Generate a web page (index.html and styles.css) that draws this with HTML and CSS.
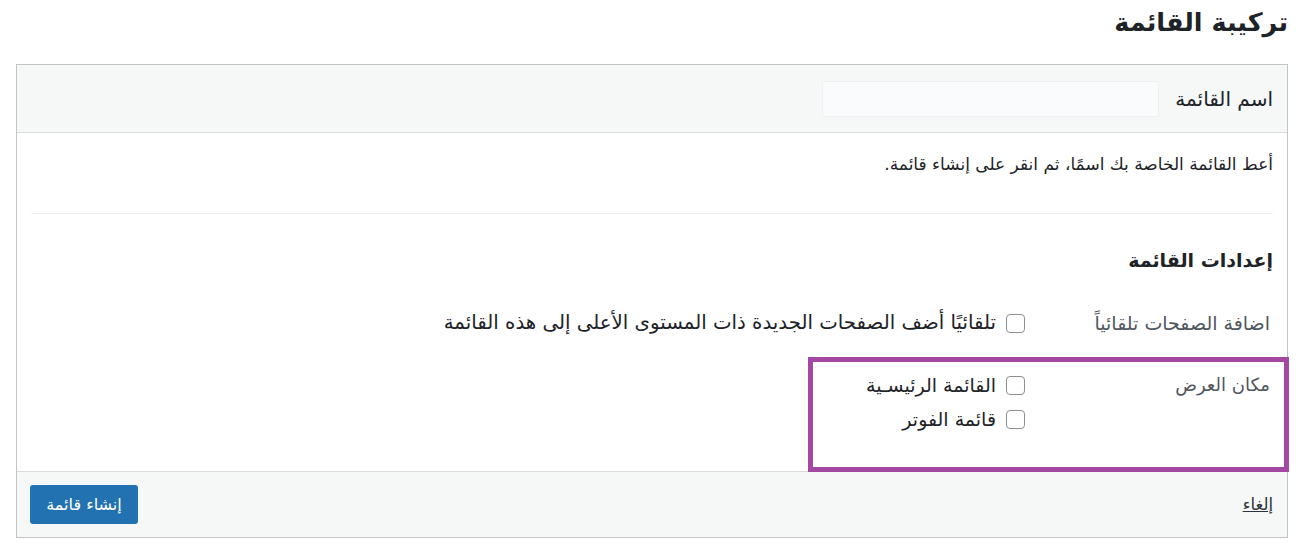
FILE: index.html
```html
<!DOCTYPE html>
<html lang="ar" dir="rtl">
<head>
<meta charset="utf-8">
<title>تركيبة القائمة</title>
<link rel="stylesheet" href="styles.css">
</head>
<body>
<div class="wrap">
  <h1 class="page-title">تركيبة القائمة</h1>
  <div class="menu-box">
    <div class="menu-header">
      <label class="name-label" for="menu-name">اسم القائمة</label>
      <input class="name-input" id="menu-name" type="text">
    </div>
    <div class="menu-body">
      <p class="hint">أعط القائمة الخاصة بك اسمًا، ثم انقر على إنشاء قائمة.</p>
      <hr class="sep">
      <h3 class="settings-title">إعدادات القائمة</h3>
      <div class="setting-row">
        <div class="setting-label">اضافة الصفحات تلقائياً</div>
        <div class="setting-options">
          <label class="option wide"><span class="cb"></span>تلقائيًا أضف الصفحات الجديدة ذات المستوى الأعلى إلى هذه القائمة</label>
        </div>
      </div>
      <div class="setting-row locations">
        <div class="setting-label">مكان العرض</div>
        <div class="setting-options">
          <label class="option"><span class="cb"></span>القائمة الرئيسـية</label>
          <label class="option"><span class="cb"></span>قائمة الفوتر</label>
        </div>
      </div>
    </div>
    <div class="menu-footer">
      <a class="cancel" href="#">إلغاء</a>
      <button class="btn-primary" type="button">إنشاء قائمة</button>
    </div>
  </div>
  <div class="highlight"></div>
</div>
</body>
</html>
```
FILE: styles.css
```css
* { box-sizing: border-box; }
html, body {
  margin: 0;
  padding: 0;
  background: #ffffff;
}
body {
  font-family: "DejaVu Sans", sans-serif;
  color: #1d2327;
  font-size: 13px;
}
.wrap {
  position: relative;
  padding: 0 15px 0 16px;
}
.page-title {
  margin: 0;
  height: 64px;
  padding-top: 3px;
  font-size: 25.5px;
  font-weight: 700;
  line-height: 38px;
  color: #1d2327;
}
.menu-box {
  border: 1px solid #c3c4c7;
  background: #fff;
}
.menu-header {
  display: flex;
  align-items: center;
  gap: 16px;
  height: 68px;
  padding: 0 14px;
  background: #f6f7f7;
  border-bottom: 1px solid #dcdcde;
}
.name-label {
  font-size: 20px;
  color: #1d2327;
}
.name-input {
  width: 337px;
  height: 36px;
  border: 1px solid #f0f0f1;
  background: #fafbfc;
  border-radius: 2px;
  font: inherit;
}
.menu-body {
  padding: 0 14px;
}
.hint {
  margin: 0;
  padding-top: 19px;
  height: 80px;
  line-height: 24px;
  font-size: 17px;
}
.sep {
  margin: 0;
  border: 0;
  border-top: 1px solid #f0f0f1;
}
.settings-title {
  margin: 0;
  padding-top: 32px;
  height: 80px;
  line-height: 28px;
  font-size: 19px;
  font-weight: 700;
}
.setting-row {
  display: flex;
  gap: 14px;
}
.setting-label {
  width: 234px;
  flex: none;
  color: #50575e;
  font-size: 19px;
  line-height: 28px;
  padding-top: 15px;
  padding-right: 3px;
}
.setting-options {
  display: flex;
  flex-direction: column;
  gap: 6px;
  padding-top: 15px;
}
.setting-row.locations .setting-label,
.setting-row.locations .setting-options {
  padding-top: 34px;
  padding-bottom: 38px;
}
.setting-row.locations .setting-label {
  font-size: 18px;
}
.option {
  display: flex;
  align-items: center;
  gap: 10px;
  font-size: 19px;
  line-height: 28px;
  color: #1d2327;
}
.option.wide {
  font-size: 19.75px;
}
.cb {
  width: 19px;
  height: 19px;
  flex: none;
  border: 1px solid #8c8f94;
  border-radius: 4px;
  background: #fff;
}
.menu-footer {
  display: flex;
  justify-content: space-between;
  align-items: center;
  height: 66px;
  padding: 0 14px 0 13px;
  background: #f6f7f7;
  border-top: 1px solid #dcdcde;
}
.cancel {
  color: #2c3338;
  font-size: 16.5px;
  text-decoration: underline;
}
.btn-primary {
  width: 108px;
  height: 39px;
  border: 0;
  border-radius: 3px;
  background: #2271b1;
  color: #fff;
  font-family: "DejaVu Sans", sans-serif;
  font-size: 16px;
}
.highlight {
  position: absolute;
  top: 357px;
  right: 14px;
  width: 481px;
  height: 115px;
  border: 5px solid #a349a4;
  pointer-events: none;
}
```
